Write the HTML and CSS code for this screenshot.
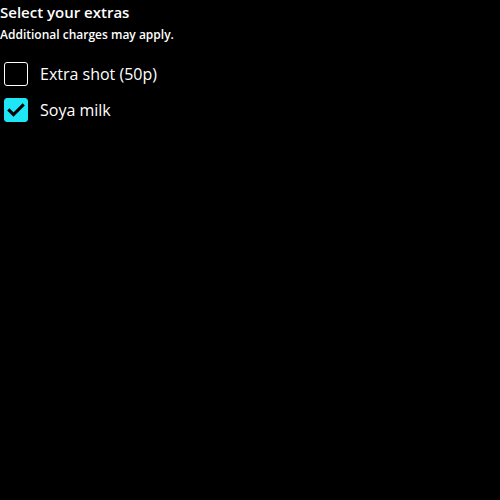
FILE: index.html
```html
<!DOCTYPE html>
<html lang="en">
<head>
<meta charset="utf-8">
<link rel="stylesheet" href="styles.css">
</head>
<body>
<fieldset class="group">
  <legend class="title">Select your extras</legend>
  <p class="hint">Additional charges may apply.</p>
  <label class="option">
    <span class="box"></span>
    <span class="label">Extra shot (50p)</span>
  </label>
  <label class="option">
    <span class="box checked">
      <svg viewBox="0 0 24 24" width="20" height="20"><path d="M4 12.5l5 5L20 6.5" fill="none" stroke="#000" stroke-width="3.6" stroke-linecap="square"/></svg>
    </span>
    <span class="label">Soya milk</span>
  </label>
</fieldset>
</body>
</html>
```

FILE: styles.css
```css
html, body {
  margin: 0;
  padding: 0;
  background: #000;
  color: #fff;
  font-family: "Open Sans", "Noto Sans", sans-serif;
}
.group {
  border: 0;
  margin: 0;
  padding: 0;
}
.title {
  padding: 0;
  font-size: 15px;
  font-weight: 600;
  line-height: 24px;
}
.hint {
  margin: 0 0 10px;
  font-size: 12px;
  font-weight: 600;
  line-height: 22px;
}
.option {
  box-sizing: border-box;
  display: flex;
  align-items: center;
  gap: 12px;
  padding: 0 4px;
  height: 36px;
}
.box {
  box-sizing: border-box;
  width: 24px;
  height: 24px;
  border: 1.5px solid #fff;
  border-radius: 3px;
  display: flex;
  align-items: center;
  justify-content: center;
}
.box.checked {
  background: #1ee6f7;
  border-color: #1ee6f7;
}
.label {
  font-size: 16px;
  line-height: 24px;
}
```
